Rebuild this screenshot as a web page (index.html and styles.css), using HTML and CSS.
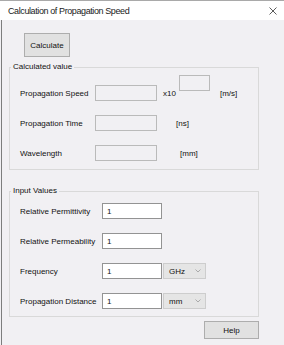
FILE: index.html
```html
<!DOCTYPE html>
<html lang="en">
<head>
    <meta charset="UTF-8">
    <meta name="viewport" content="width=device-width, initial-scale=1.0">
    <title>Calculation of Propagation Speed</title>
    <link rel="stylesheet" href="styles.css">
</head>
<body>
    <div class="window">
        <div class="titlebar">
            <span class="title">Calculation of Propagation Speed</span>
            <svg class="close" viewBox="0 0 8 8" width="8" height="8">
                <path d="M0.5 0.5 L7.5 7.5 M7.5 0.5 L0.5 7.5" stroke="#4a4a4a" stroke-width="0.9" fill="none"/>
            </svg>
        </div>

        <div class="client">
            <button class="btn btn-calc">Calculate</button>

            <fieldset class="group group-calc">
                <legend>Calculated value</legend>
                <div class="rows">
                    <div class="row">
                        <label class="label">Propagation Speed</label>
                        <input class="field" readonly>
                        <span class="unit unit-x10">x10</span>
                        <input class="field field-exp" readonly>
                        <span class="unit unit-ms">[m/s]</span>
                    </div>
                    <div class="row">
                        <label class="label">Propagation Time</label>
                        <input class="field" readonly>
                        <span class="unit unit-ns">[ns]</span>
                    </div>
                    <div class="row">
                        <label class="label">Wavelength</label>
                        <input class="field" readonly>
                        <span class="unit unit-mm">[mm]</span>
                    </div>
                </div>
            </fieldset>

            <fieldset class="group group-input">
                <legend>Input Values</legend>
                <div class="rows">
                    <div class="row">
                        <label class="label">Relative Permittivity</label>
                        <input class="field" value="1">
                    </div>
                    <div class="row">
                        <label class="label">Relative Permeability</label>
                        <input class="field" value="1">
                    </div>
                    <div class="row">
                        <label class="label">Frequency</label>
                        <input class="field" value="1">
                        <div class="select">
                            <span>GHz</span>
                            <svg class="chevron" viewBox="0 0 6 4" width="6" height="4">
                                <path d="M0.5 0.5 L3 3 L5.5 0.5" stroke="#9a9a9a" stroke-width="0.8" fill="none"/>
                            </svg>
                        </div>
                    </div>
                    <div class="row">
                        <label class="label">Propagation Distance</label>
                        <input class="field" value="1">
                        <div class="select">
                            <span>mm</span>
                            <svg class="chevron" viewBox="0 0 6 4" width="6" height="4">
                                <path d="M0.5 0.5 L3 3 L5.5 0.5" stroke="#9a9a9a" stroke-width="0.8" fill="none"/>
                            </svg>
                        </div>
                    </div>
                </div>
            </fieldset>

            <div class="footer">
                <button class="btn btn-help">Help</button>
            </div>
        </div>
    </div>
</body>
</html>
```

FILE: styles.css
```css
* {
    margin: 0;
    padding: 0;
    box-sizing: border-box;
}

body {
    background: #f1f0f3;
    font-family: "Liberation Sans", Arial, sans-serif;
    font-size: 8px;
    color: #111111;
}

.window {
    width: 284px;
    height: 345px;
    overflow: hidden;
}

.titlebar {
    height: 20px;
    background: #ffffff;
    border-top: 1px solid #a9a9a9;
    display: flex;
    align-items: center;
    justify-content: space-between;
    padding: 0 7px 0 8px;
}

.title {
    font-size: 9px;
    letter-spacing: -0.4px;
    color: #1a1a1a;
}

.close {
    display: block;
}

.client {
    margin-left: 1px;
    border-left: 1px solid #7d7d7d;
    height: 325px;
    padding: 13px 0 0 7px;
}

/* Buttons */
.btn {
    font-family: inherit;
    font-size: 8px;
    color: #111111;
    background: #e1e1e1;
    border: 1px solid #adadad;
    border-radius: 0;
}

.btn-calc {
    display: block;
    width: 46px;
    height: 24px;
    margin-left: 15px;
}

.btn-help {
    width: 55px;
    height: 18px;
}

/* Group boxes */
.group {
    width: 250px;
    border: 1px solid #d9d9d9;
    padding: 0;
    margin-top: 5px;
}

.group legend {
    margin-left: 1px;
    padding: 0 2px;
    line-height: 10px;
}

.group-input {
    margin-top: 16px;
}

.group-calc .rows {
    padding: 6px 0 1px 10px;
}

.group-input .rows {
    padding: 0 0 0 10px;
}

.row {
    display: flex;
    align-items: center;
    height: 30px;
}

.group-calc .label {
    width: 75px;
}

.group-input .label {
    width: 82px;
}

.field {
    width: 62px;
    height: 16px;
    border: 1px solid #bababa;
    border-radius: 0;
    background: transparent;
    font-family: inherit;
    font-size: 8px;
    color: #111111;
    padding: 0 4px;
    outline: none;
}

.group-input .field {
    width: 60px;
    background: #ffffff;
    border-color: #939393;
}

.field-exp {
    width: 31px;
    align-self: flex-start;
    margin: -3px 0 0 3px;
}

.unit-x10 {
    margin-left: 6px;
}

.unit-ms {
    margin-left: 10px;
}

.unit-ns {
    margin-left: 19px;
}

.unit-mm {
    margin-left: 23px;
}

.select {
    width: 43px;
    height: 16px;
    margin-left: 1px;
    background: #e5e5e5;
    border: 1px solid #cdcdcd;
    display: flex;
    align-items: center;
    justify-content: space-between;
    padding: 0 4px 0 5px;
}

.chevron {
    display: block;
}

.footer {
    width: 250px;
    display: flex;
    justify-content: flex-end;
    margin-top: 4px;
}
```
